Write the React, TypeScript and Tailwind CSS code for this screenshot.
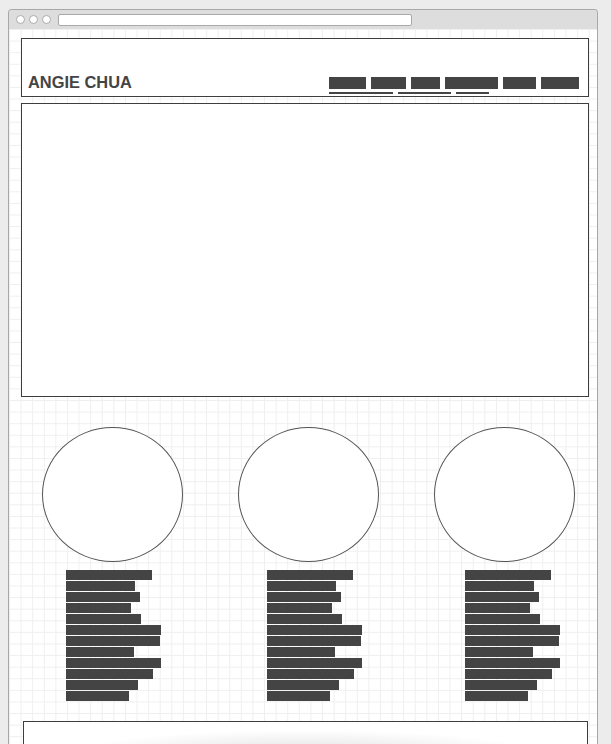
const navItems = [37, 35, 29, 53, 33, 38];
const underlines = [64, 53, 33];
const barWidths = [86, 69, 74, 65, 75, 95, 94, 68, 95, 87, 72, 63];
const columns = [{ offset: "ml-[24px]" }, { offset: "ml-[29px]" }, { offset: "ml-[31px]" }];

function Bars({ offset }: { offset: string }) {
  return (
    <div className={`mt-[8px] flex flex-col gap-[1px] ${offset}`}>
      {barWidths.map((w, i) => (
        <div key={i} className="h-[10px] bg-[#444]" style={{ width: w }} />
      ))}
    </div>
  );
}

export default function App() {
  return (
    <div className="h-screen overflow-hidden bg-[#ececec] pl-[8px] pt-[9px] font-['Liberation_Sans',Arial,sans-serif]">
      <div className="w-[590px] overflow-hidden rounded-t-[4px] border border-b-0 border-[#a8a8a8]">
        {/* title bar */}
        <div className="flex h-[19px] items-center gap-[4px] bg-[#dddddd] pl-[7px]">
          <span className="h-[9px] w-[9px] rounded-full border border-[#aaa] bg-white" />
          <span className="h-[9px] w-[9px] rounded-full border border-[#aaa] bg-white" />
          <span className="h-[9px] w-[9px] rounded-full border border-[#aaa] bg-white" />
          <div className="ml-[3px] h-[12px] w-[354px] rounded-[2px] border border-[#a9a9a9] bg-white" />
        </div>

        {/* page */}
        <div className="h-[760px] bg-white bg-[linear-gradient(to_right,#efefef_1px,transparent_1px),linear-gradient(to_bottom,#efefef_1px,transparent_1px)] bg-[size:11.6px_11.6px] pl-[12px] pr-[8px] pt-[9px]">
          <header className="flex h-[59px] items-end justify-between border border-[#3d3d3d] bg-white pb-[2px] pl-[6px] pr-[9px]">
            <div className="mb-[4px] text-[16.4px] font-bold leading-[16px] text-[#444]">ANGIE CHUA</div>
            <nav className="flex flex-col">
              <div className="flex gap-[5px]">
                {navItems.map((w, i) => (
                  <div key={i} className="h-[12px] bg-[#444]" style={{ width: w }} />
                ))}
              </div>
              <div className="mt-[3px] flex gap-[5px]">
                {underlines.map((w, i) => (
                  <div key={i} className="h-[2px] bg-[#444]" style={{ width: w }} />
                ))}
              </div>
            </nav>
          </header>

          <section className="mt-[6px] h-[294px] border border-[#3d3d3d] bg-white" />

          <section className="mt-[30px] flex pl-[21px]">
            {columns.map((c, i) => (
              <div key={i} className="w-[196px] shrink-0">
                <div className="h-[135px] w-[141px] rounded-[50%] border border-[#555] bg-white" />
                <Bars offset={c.offset} />
              </div>
            ))}
          </section>

          <footer className="ml-[2px] mr-[1px] mt-[20px] h-[60px] border border-[#3d3d3d] bg-[radial-gradient(ellipse_240px_26px_at_50%_34px,#dedede,#ffffff)]" />
        </div>
      </div>
    </div>
  );
}
